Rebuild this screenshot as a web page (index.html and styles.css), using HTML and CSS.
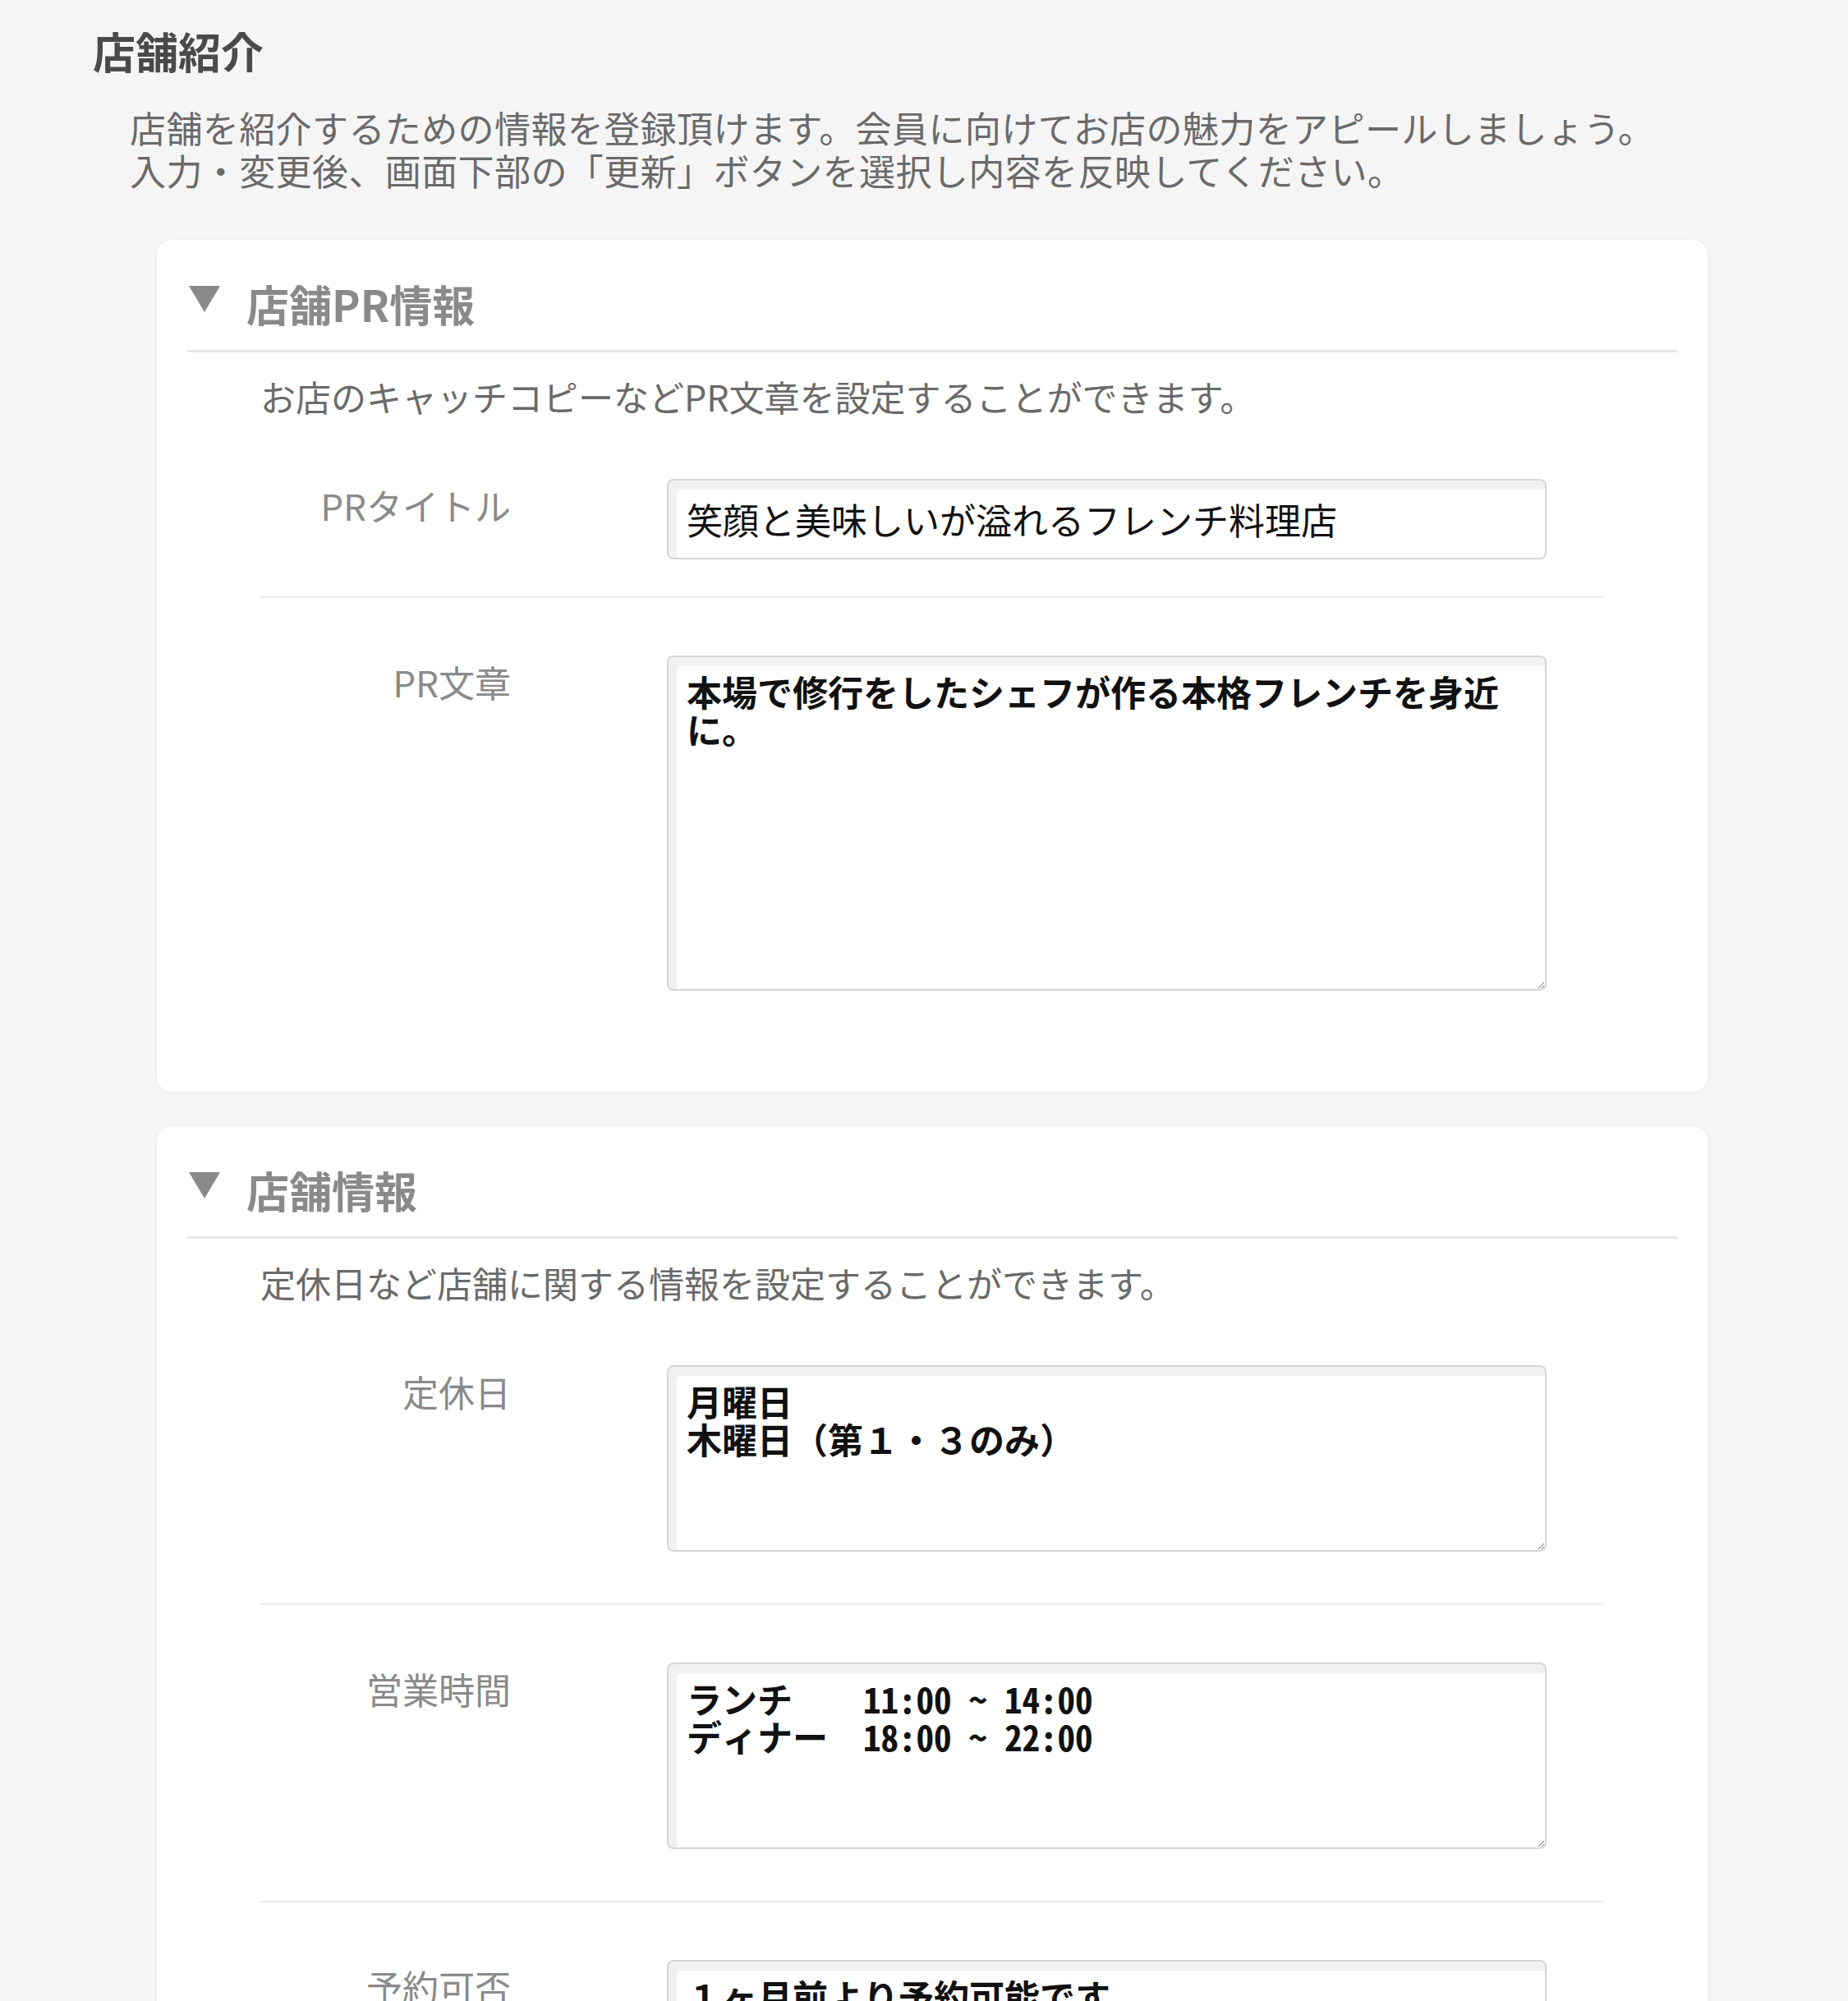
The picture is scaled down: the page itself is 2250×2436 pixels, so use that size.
FILE: index.html
```html
<!DOCTYPE html>
<html lang="ja">
<head>
  <meta charset="UTF-8">
  <meta name="viewport" content="width=device-width, initial-scale=1.0">
  <title>店舗紹介</title>
  <link rel="stylesheet" href="styles.css">
</head>
<body>
  <div class="container">
    <h1>店舗紹介</h1>
    <p class="lead">店舗を紹介するための情報を登録頂けます。会員に向けてお店の魅力をアピールしましょう。<br>入力・変更後、画面下部の「更新」ボタンを選択し内容を反映してください。</p>

    <section class="panel">
      <h2 class="panel-title"><span class="arrow"></span>店舗PR情報</h2>
      <div class="panel-body">
        <p class="panel-note">お店のキャッチコピーなどPR文章を設定することができます。</p>
        <div class="field">
          <label class="field-label" for="pr-title">PRタイトル</label>
          <input class="field-input" id="pr-title" type="text" value="笑顔と美味しいが溢れるフレンチ料理店">
        </div>
        <div class="field">
          <label class="field-label" for="pr-text">PR文章</label>
          <textarea class="field-area tall" id="pr-text">本場で修行をしたシェフが作る本格フレンチを身近に。</textarea>
        </div>
      </div>
    </section>

    <section class="panel">
      <h2 class="panel-title"><span class="arrow"></span>店舗情報</h2>
      <div class="panel-body">
        <p class="panel-note">定休日など店舗に関する情報を設定することができます。</p>
        <div class="field">
          <label class="field-label" for="holiday">定休日</label>
          <textarea class="field-area" id="holiday">月曜日
木曜日（第１・３のみ）</textarea>
        </div>
        <div class="field">
          <label class="field-label" for="hours">営業時間</label>
          <textarea class="field-area" id="hours">ランチ    11:00 ~ 14:00
ディナー  18:00 ~ 22:00</textarea>
        </div>
        <div class="field">
          <label class="field-label" for="reserve">予約可否</label>
          <textarea class="field-area" id="reserve">１ヶ月前より予約可能です</textarea>
        </div>
      </div>
    </section>
  </div>
</body>
</html>
```

FILE: styles.css
```css
body {
  margin: 0;
  background-color: #f5f5f5;
  font-family: "Noto Sans CJK JP", "Noto Sans", sans-serif;
  color: #666;
}
.container {
  padding: 31px 0 80px 113px;
}
h1 {
  margin: 0;
  font-size: 52px;
  line-height: 62px;
  font-weight: 700;
  color: #4a4a4a;
}
.lead {
  margin: 36px 0 0 45px;
  font-size: 44px;
  line-height: 52px;
  letter-spacing: 0.4px;
  color: #6a6a6a;
}
.panel {
  box-sizing: border-box;
  width: 1888px;
  margin: 59px 0 0 78px;
  padding: 47px 37px 60px;
  background-color: #fff;
  border-radius: 18px;
  box-shadow: 0 1px 6px rgba(0, 0, 0, 0.06);
}
.panel + .panel {
  margin-top: 42px;
}
.panel-title {
  display: flex;
  align-items: center;
  gap: 32px;
  margin: 0;
  padding: 0 0 25px 2px;
  border-bottom: 3px solid #e6e6e6;
  font-size: 52px;
  line-height: 62px;
  font-weight: 700;
  color: #8a8a8a;
}
.arrow {
  width: 0;
  height: 0;
  margin-bottom: 12px;
  border-left: 19px solid transparent;
  border-right: 19px solid transparent;
  border-top: 32px solid #8a8a8a;
}
.panel-body {
  padding: 0 90px 0 89px;
}
.panel-note {
  margin: 28px 0 6px;
  font-size: 43px;
  line-height: 50px;
  color: #6a6a6a;
}
.field {
  display: grid;
  grid-template-columns: 305px 1071px;
  column-gap: 190px;
  align-items: start;
  padding: 70px 0 45px;
  border-bottom: 2px solid #e9e9e9;
}
.field:last-child {
  border-bottom: none;
}
.field-label {
  padding-top: 6px;
  text-align: right;
  font-size: 44px;
  line-height: 52px;
  color: #8a8a8a;
}
.field-input,
.field-area {
  box-sizing: border-box;
  display: block;
  width: 1071px;
  margin: 0;
  border: 2px solid #d6d6d6;
  border-radius: 8px;
  background-color: #fff;
  box-shadow: inset 10px 11px 0 0 #f1f1f1;
  color: #111;
  outline: none;
}
.field-input {
  height: 98px;
  padding: 0 22px;
  font-family: "Noto Sans CJK JP", sans-serif;
  font-size: 44px;
}
.field-area {
  height: 227px;
  margin-bottom: 18px;
  padding: 18px 22px;
  font-family: "Noto Sans Mono CJK JP", "DejaVu Sans Mono", monospace;
  font-size: 43px;
  line-height: 46px;
  font-weight: 700;
}
.field-area.tall {
  height: 408px;
}
```
